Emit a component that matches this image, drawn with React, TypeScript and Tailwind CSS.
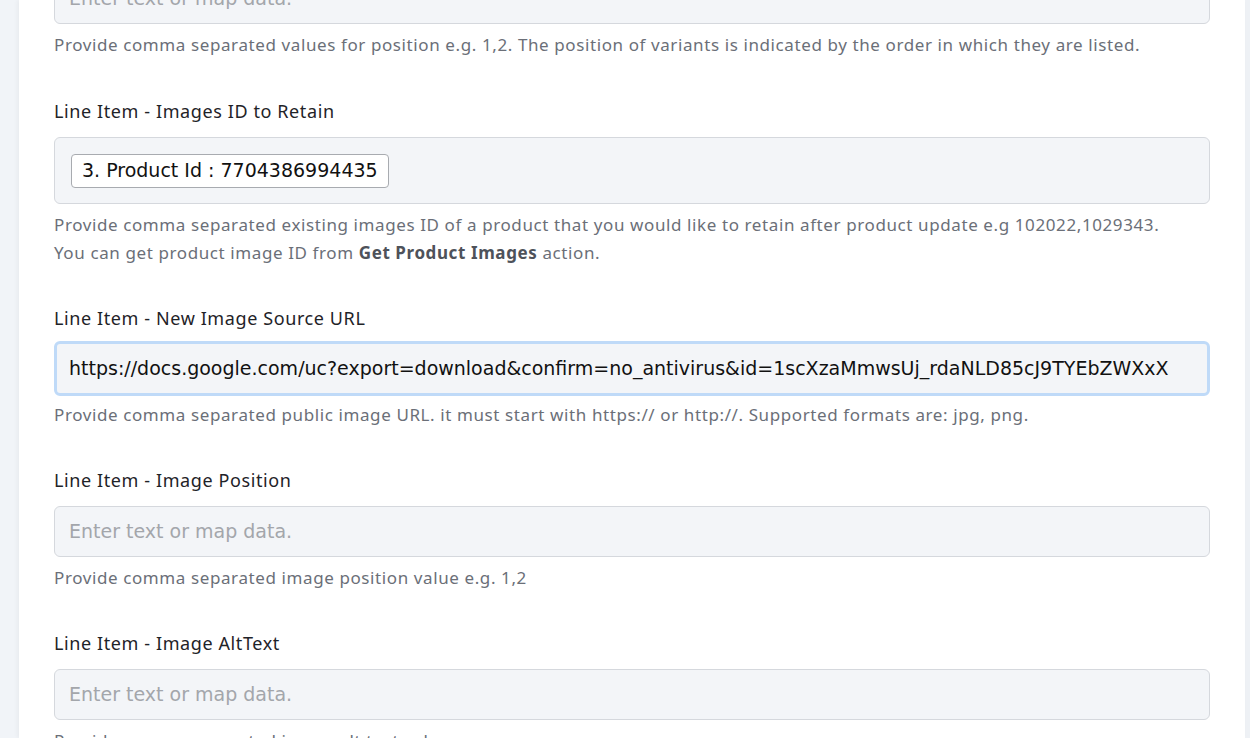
const ui = "font-['Noto_Sans','Open_Sans',sans-serif]";
const mono = "font-['DejaVu_Sans','Verdana',sans-serif]";

function Label({ children }: { children: React.ReactNode }) {
  return (
    <div className={`${ui} text-[18px] tracking-[0.6px] leading-6 text-[#1f2328] mt-[3px] mb-[14px]`}>{children}</div>
  );
}

function Help({ children }: { children: React.ReactNode }) {
  return (
    <div className={`${ui} text-[17px] tracking-[0.6px] leading-7 text-[#6b6f78] mt-[7px]`}>{children}</div>
  );
}

function TextInput({ value, focused }: { value?: string; focused?: boolean }) {
  return (
    <div
      className={`flex items-center rounded-md bg-[#f3f5f8] ${mono} text-[19px] ${
        focused
          ? "h-[55px] -mt-[3px] -mb-[2px] px-[12px] border-[3px] border-[#bfdaf8]"
          : "h-[51px] px-[14px] border border-[#d5d8dd]"
      }`}
    >
      {value ? (
        <span className="text-[#111] whitespace-nowrap">{value}</span>
      ) : (
        <span className="text-[#a3a6ab]">Enter text or map data.</span>
      )}
    </div>
  );
}

export default function App() {
  return (
    <div className="h-[738px] overflow-hidden bg-[#eef1f5] flex">
      <div className="w-[19px] shrink-0 bg-[#f1f4f8]" />
      <div className="w-[1226px] shrink-0 bg-white shadow-[-2px_0_4px_rgba(0,0,0,0.04)] px-[35px]">
        <div className="-mt-[27px]">
          <TextInput />
          <Help>
            Provide comma separated values for position e.g. 1,2. The position of variants is indicated by the order in
            which they are listed.
          </Help>
        </div>

        <div className="mt-[40px]">
          <Label>Line Item - Images ID to Retain</Label>
          <div className="h-[67px] flex items-center rounded-md border border-[#d5d8dd] bg-[#f3f5f8] px-4">
            <span
              className={`inline-flex h-[34px] items-center px-[10px] rounded border border-[#a8abb0] bg-white ${mono} text-[19px] text-[#111]`}
            >
              3. Product Id : 7704386994435
            </span>
          </div>
          <Help>
            Provide comma separated existing images ID of a product that you would like to retain after product update
            e.g 102022,1029343.
            <br />
            You can get product image ID from <b className="font-bold text-[#4e525a]">Get Product Images</b> action.
          </Help>
        </div>

        <div className="mt-[39px]">
          <Label>Line Item - New Image Source URL</Label>
          <TextInput
            focused
            value="https://docs.google.com/uc?export=download&confirm=no_antivirus&id=1scXzaMmwsUj_rdaNLD85cJ9TYEbZWXxX"
          />
          <Help>
            Provide comma separated public image URL. it must start with https:// or http://. Supported formats are:
            jpg, png.
          </Help>
        </div>

        <div className="mt-[39px]">
          <Label>Line Item - Image Position</Label>
          <TextInput />
          <Help>Provide comma separated image position value e.g. 1,2</Help>
        </div>

        <div className="mt-[39px]">
          <Label>Line Item - Image AltText</Label>
          <TextInput />
          <Help>Provide comma separated image alt text value.</Help>
        </div>
      </div>
    </div>
  );
}
